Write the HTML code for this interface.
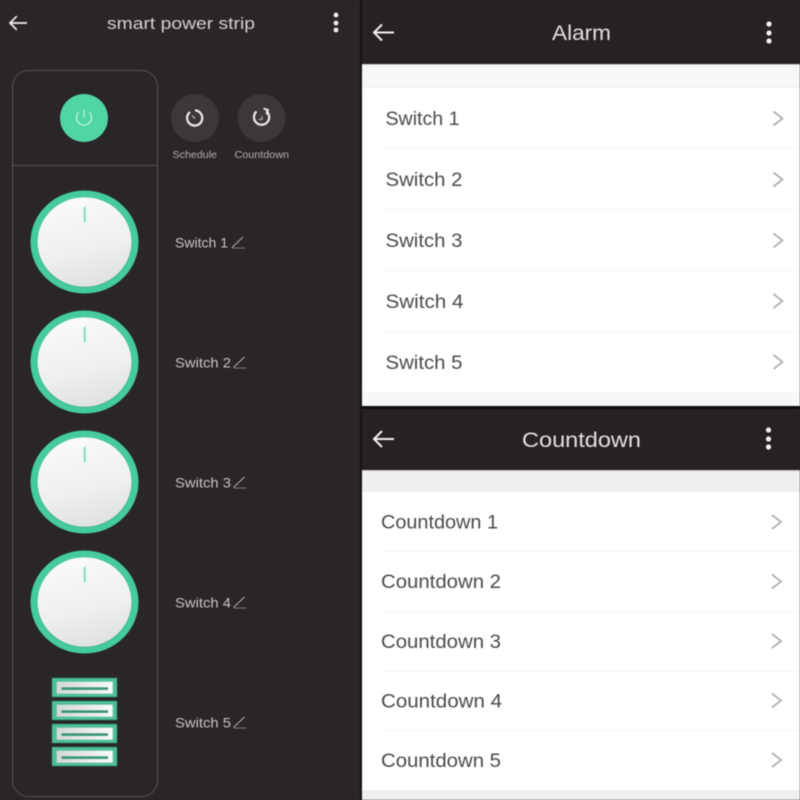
<!DOCTYPE html>
<html>
<head>
<meta charset="utf-8">
<style>
html,body{margin:0;padding:0;background:#292528;width:800px;height:800px;overflow:hidden}
svg{display:block;position:absolute;left:0;top:0;filter:blur(.4px)}
text{font-family:"Liberation Sans","DejaVu Sans",sans-serif}
</style>
</head>
<body>
<svg width="800" height="800" viewBox="0 0 800 800" xmlns="http://www.w3.org/2000/svg">
<defs>
<linearGradient id="k" x1="0.35" y1="0" x2="0.6" y2="1"><stop offset="0" stop-color="#fafafa"/><stop offset="0.6" stop-color="#eeefef"/><stop offset="1" stop-color="#dfe1e1"/></linearGradient>
<linearGradient id="u" x1="0" y1="0" x2="1" y2="0"><stop offset="0" stop-color="#d5d7d6"/><stop offset="1" stop-color="#fafafa"/></linearGradient>
<g id="knob">
<ellipse cx="84.500" cy="0" rx="54" ry="51.500" fill="#46cb9e"/>
<ellipse cx="84.500" cy="0.300" rx="47.500" ry="45.500" fill="#2f9d7c" opacity=".55"/>
<ellipse cx="84.500" cy="0" rx="47" ry="44.800" fill="url(#k)"/>
<rect x="83.700" y="-35" width="2" height="15" fill="#7fdcbc"/>
</g>
<g id="usb">
<rect x="52" y="0" width="65" height="19" fill="#4fbf98" stroke="#2f7c66" stroke-width="0.6"/>
<rect x="56.700" y="3.700" width="56" height="12" fill="url(#u)"/>
<rect x="61.500" y="9.300" width="46.500" height="2.600" fill="#379478"/>
</g>
<g id="pen" fill="none" stroke-width="1"><path d="M0 7.500 L11 -3" stroke="#b4b0b2"/><path d="M0 8 H13" stroke="#7d797b"/></g>
<path id="chev" d="M-4.500 -7 L4.500 0 L-4.500 7" fill="none" stroke="#b0b0b0" stroke-width="1.800"/>
<path id="back" d="M10 0 H-9.500 M-2 -8 L-10 0 L-2 8" fill="none" stroke="#f4eff2" stroke-width="2"/>
</defs>

<rect width="800" height="800" fill="#252124"/>
<rect width="360" height="800" fill="#292528"/>

<!-- left panel -->
<use href="#back" transform="translate(18.500 23) scale(.85)"/>
<text x="107" y="29" font-size="17" fill="#d6d1d3" textLength="148" lengthAdjust="spacingAndGlyphs">smart power strip</text>
<circle cx="336" cy="15" r="2.400" fill="#f0eef0"/><circle cx="336" cy="23" r="2.400" fill="#f0eef0"/><circle cx="336" cy="30" r="2.400" fill="#f0eef0"/>

<rect x="12.500" y="70.500" width="145" height="726" rx="16" fill="#292528" stroke="#575356" stroke-width="1"/>
<line x1="12.500" y1="165.500" x2="157.500" y2="165.500" stroke="#575356" stroke-width="1"/>

<circle cx="84" cy="118" r="24" fill="#4fd6a4"/>
<path d="M78.500 112.500 A7.500 7.500 0 1 0 89.500 112.500" fill="none" stroke="#c9f0e2" stroke-width="1.300"/>
<line x1="84" y1="110" x2="84" y2="117" stroke="#c9f0e2" stroke-width="1.300"/>

<circle cx="195" cy="118" r="24" fill="#3b373a"/>
<circle cx="261.500" cy="118" r="24" fill="#3b373a"/>
<path d="M190 112 A7.600 7.600 0 1 0 195 110.400" fill="none" stroke="#efebed" stroke-width="2.200"/>
<line x1="192" y1="115.500" x2="195" y2="118.500" stroke="#b0acae" stroke-width="1.300"/>
<path d="M256.500 111.500 A7.600 7.600 0 1 0 266 111" fill="none" stroke="#efebed" stroke-width="2.200"/>
<path d="M263.500 108.500 L268 110 L266.500 114.500" fill="none" stroke="#efebed" stroke-width="1.800"/>
<path d="M258.500 119.500 H262 V116" fill="none" stroke="#a8a4a6" stroke-width="1.300"/>
<text x="172.500" y="158" font-size="10" fill="#b5b1b3" textLength="44.500" lengthAdjust="spacingAndGlyphs">Schedule</text>
<text x="234.500" y="158" font-size="10" fill="#b5b1b3" textLength="54.500" lengthAdjust="spacingAndGlyphs">Countdown</text>

<use href="#knob" y="242"/>
<use href="#knob" y="362"/>
<use href="#knob" y="482"/>
<use href="#knob" y="602"/>

<use href="#usb" y="678"/>
<use href="#usb" y="701"/>
<use href="#usb" y="724"/>
<use href="#usb" y="747"/>

<text x="175" y="247.500" font-size="13.500" fill="#c9c5c7" textLength="53" lengthAdjust="spacingAndGlyphs">Switch 1</text>
<use href="#pen" transform="translate(232 240)"/>
<text x="175" y="367.500" font-size="13.500" fill="#c9c5c7" textLength="56" lengthAdjust="spacingAndGlyphs">Switch 2</text>
<use href="#pen" transform="translate(233.500 360)"/>
<text x="175" y="487.500" font-size="13.500" fill="#c9c5c7" textLength="56" lengthAdjust="spacingAndGlyphs">Switch 3</text>
<use href="#pen" transform="translate(233.500 480)"/>
<text x="175" y="607.500" font-size="13.500" fill="#c9c5c7" textLength="56" lengthAdjust="spacingAndGlyphs">Switch 4</text>
<use href="#pen" transform="translate(233.500 600)"/>
<text x="175" y="727.500" font-size="13.500" fill="#c9c5c7" textLength="56" lengthAdjust="spacingAndGlyphs">Switch 5</text>
<use href="#pen" transform="translate(233.500 720)"/>

<!-- alarm panel -->
<rect x="360" y="0" width="2" height="800" fill="#161415"/>
<rect x="362" y="64" width="438" height="1" fill="#cfcfcf"/>
<rect x="362" y="65" width="438" height="341" fill="#f7f7f7"/>
<rect x="362" y="87" width="438" height="1" fill="#eeeeee"/>
<rect x="362" y="88" width="438" height="304" fill="#ffffff"/>
<g fill="#f6f6f6">
<rect x="380" y="148" width="420" height="1"/>
<rect x="380" y="209" width="420" height="1"/>
<rect x="380" y="270" width="420" height="1"/>
<rect x="380" y="331" width="420" height="1"/>
</g>
<use href="#back" transform="translate(384 32.500)"/>
<text x="552" y="40" font-size="21" fill="#e4dfe2" textLength="59" lengthAdjust="spacingAndGlyphs">Alarm</text>
<circle cx="769" cy="24" r="2.600" fill="#f4f2f3"/><circle cx="769" cy="33" r="2.600" fill="#f4f2f3"/><circle cx="769" cy="41" r="2.600" fill="#f4f2f3"/>

<g font-size="19" fill="#4a4a4a">
<text x="385.500" y="125" textLength="74" lengthAdjust="spacingAndGlyphs">Switch 1</text>
<text x="385.500" y="186" textLength="77" lengthAdjust="spacingAndGlyphs">Switch 2</text>
<text x="385.500" y="247" textLength="77" lengthAdjust="spacingAndGlyphs">Switch 3</text>
<text x="385.500" y="308" textLength="78" lengthAdjust="spacingAndGlyphs">Switch 4</text>
<text x="385.500" y="369" textLength="77" lengthAdjust="spacingAndGlyphs">Switch 5</text>
</g>
<use href="#chev" x="778" y="118.500"/>
<use href="#chev" x="778" y="179.500"/>
<use href="#chev" x="778" y="240.500"/>
<use href="#chev" x="778" y="301"/>
<use href="#chev" x="778" y="362"/>

<!-- countdown panel -->
<rect x="360" y="406" width="440" height="3" fill="#0e0c0d"/>
<rect x="362" y="409" width="438" height="61" fill="#252124"/>
<rect x="362" y="470" width="438" height="1" fill="#c9c9c9"/>
<rect x="362" y="471" width="438" height="21" fill="#efefef"/>
<rect x="362" y="492" width="438" height="298" fill="#ffffff"/>
<rect x="362" y="790" width="438" height="10" fill="#efefef"/>
<g fill="#f6f6f6">
<rect x="380" y="551" width="420" height="1"/>
<rect x="380" y="611" width="420" height="1"/>
<rect x="380" y="671" width="420" height="1"/>
<rect x="380" y="730" width="420" height="1"/>
</g>
<use href="#back" transform="translate(384 439)"/>
<text x="522" y="447" font-size="21" fill="#e4dfe2" textLength="119" lengthAdjust="spacingAndGlyphs">Countdown</text>
<circle cx="768.500" cy="430" r="2.600" fill="#f4f2f3"/><circle cx="768.500" cy="439" r="2.600" fill="#f4f2f3"/><circle cx="768.500" cy="447" r="2.600" fill="#f4f2f3"/>

<g font-size="19" fill="#4a4a4a">
<text x="381" y="528.500" textLength="117" lengthAdjust="spacingAndGlyphs">Countdown 1</text>
<text x="381" y="588" textLength="120" lengthAdjust="spacingAndGlyphs">Countdown 2</text>
<text x="381" y="648" textLength="120" lengthAdjust="spacingAndGlyphs">Countdown 3</text>
<text x="381" y="707.500" textLength="121" lengthAdjust="spacingAndGlyphs">Countdown 4</text>
<text x="381" y="767" textLength="120" lengthAdjust="spacingAndGlyphs">Countdown 5</text>
</g>
<use href="#chev" x="776.500" y="522"/>
<use href="#chev" x="776.500" y="581.500"/>
<use href="#chev" x="776.500" y="641"/>
<use href="#chev" x="776.500" y="700.500"/>
<use href="#chev" x="776.500" y="760"/>
</svg>
</body>
</html>
